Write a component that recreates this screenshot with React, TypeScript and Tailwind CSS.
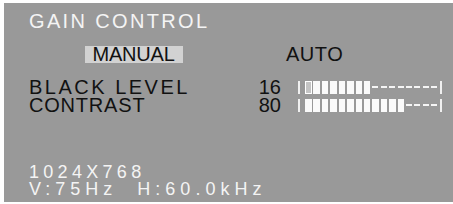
import React from "react";

function Bar({ filled }: { filled: number }) {
  return (
    <div className="flex items-center h-[13px]">
      <div className="w-[2px] h-[13px] bg-[#f0f0f0]" />
      <div className="ml-[5.5px] flex">
        {Array.from({ length: 16 }).map((_, i) => (
          <div key={i} className="w-[8.43px] h-[13px] flex items-center">
            {i < filled ? (
              i === 0 && filled < 10 ? (
                <div className="w-[6.5px] h-[13px] border-[1.5px] border-white bg-[#c4c4c4]" />
              ) : (
                <div className="w-[6.5px] h-[13px] bg-[#fafafa]" />
              )
            ) : (
              <div className="w-[6px] h-[2px] bg-[#f5f5f5]" />
            )}
          </div>
        ))}
      </div>
      <div className="w-[2px] h-[13px] bg-[#f0f0f0]" />
    </div>
  );
}

function Row({ label, track, value, filled }: { label: string; track: string; value: string; filled: number }) {
  return (
    <div className="flex items-center h-[18px]">
      <div className={`w-[228px] text-[20px] leading-[18px] text-[#111] ${track}`}>{label}</div>
      <div className="w-[24px] text-right text-[20px] leading-[18px] text-[#111]">{value}</div>
      <div className="ml-[16.5px]">
        <Bar filled={filled} />
      </div>
    </div>
  );
}

export default function App() {
  return (
    <div className="w-[453px] h-[204px] bg-white pt-[3px] pl-[4px] font-['Liberation_Sans',Arial,sans-serif]">
      <div className="w-[449px] h-[199px] bg-[#999999] pl-[25px] pt-[8.4px] flex flex-col">
        <div className="text-[20px] leading-[20px] tracking-[2.35px] text-[#f4f4f4] whitespace-pre">GAIN CONTROL</div>
        <div className="flex items-center mt-[14.6px] h-[17px]">
          <div className="ml-[56px] w-[98px] h-[17px] bg-[#d2d2d2] pl-[7.5px] text-[20px] leading-[17px] tracking-[-0.2px] text-[#111]">
            MANUAL
          </div>
          <div className="ml-[103px] text-[20px] leading-[17px] tracking-[0.5px] text-[#111]">AUTO</div>
        </div>
        <div className="mt-[15.5px] flex flex-col">
          <Row label="BLACK LEVEL" track="tracking-[2.5px]" value="16" filled={8} />
          <Row label="CONTRAST" track="tracking-[0.8px]" value="80" filled={12} />
        </div>
        <div className="mt-[49.6px] flex flex-col text-[18px] leading-[17px] text-[#f4f4f4]">
          <div className="tracking-[4.3px] whitespace-pre">1024X768</div>
          <div className="tracking-[5px] whitespace-pre">V:75Hz  H:60.0kHz</div>
        </div>
      </div>
    </div>
  );
}
